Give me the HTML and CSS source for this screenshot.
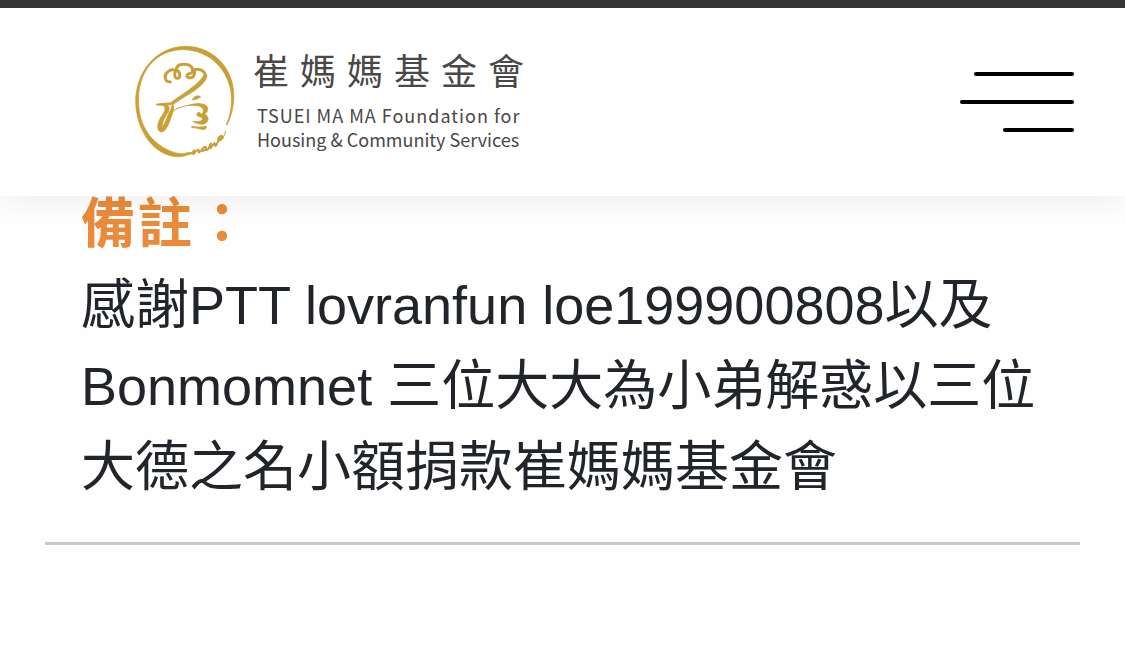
FILE: index.html
```html
<!DOCTYPE html>
<html lang="zh-Hant">
<head>
    <meta charset="UTF-8">
    <meta name="viewport" content="width=device-width, initial-scale=1.0">
    <title>崔媽媽基金會</title>
    <link rel="stylesheet" href="styles.css">
</head>
<body>

    <!-- Header -->
    <header class="site-header">
        <a class="logo" href="#">
            <svg class="logo-mark" viewBox="0 0 360 390" aria-hidden="true">
                <!-- Ring -->
                <path class="shape" d="M306 270 C322 238 328 205 326 170 C319 88 255 33 180 34 C92 36 31 112 32 203 C35 290 88 361 155 365 C174 366 188 361 200 353 L188 353 C172 359 152 355 134 347 C81 325 43 275 41 205 C36 112 92 43 176 44 C245 46 302 91 317 165 C323 205 317 240 304 268 Z"/>
                <!-- Hair -->
                <path class="line" d="M136 141 C119 141 115 121 128 111 C136 103 147 102 152 108"/>
                <path class="line" d="M152 107 C146 118 149 131 158 130 C166 128 167 115 159 108 C149 101 157 88 175 88 C193 87 204 95 203 108 C202 119 186 113 186 122 C187 131 202 131 207 121 C211 113 208 105 201 99"/>
                <path class="line" d="M203 108 C217 97 240 106 241 122"/>
                <!-- Long stroke -->
                <path class="shape" d="M246 120 C246 152 184 180 145 208 C126 211 106 212 94 210 L94 207 L137 203 C170 178 225 146 235 122 Z"/>
                <!-- Left leg -->
                <path class="shape" d="M108 206 C129 203 137 215 130 231 C121 244 112 258 112 278 C122 262 127 239 137 224 L143 206 C149 219 145 232 139 245 C132 265 124 290 109 291 C92 289 97 260 110 243 C121 229 126 212 108 209 Z"/>
                <path class="thin" d="M136 231 C155 221 189 205 216 210"/>
                <!-- Right strokes -->
                <path class="shape" d="M202 194 C207 183 219 179 227 186 C219 190 212 196 202 194 Z"/>
                <path class="shape" d="M194 211 C211 203 234 204 244 212 C253 222 247 231 239 237 C253 244 253 260 238 267 C226 270 211 265 203 259 C215 259 226 261 232 254 C233 247 226 246 219 244 C212 240 216 230 225 232 L227 238 C236 236 237 223 231 218 C222 210 207 212 194 211 Z"/>
                <path class="shape" d="M201 274 C216 277 228 276 244 274 C246 279 241 284 235 284 C224 283 214 277 201 278 Z"/>
                <!-- Handwritten tail -->
                <path class="tail" d="M188 355 C197 361 203 352 207 347 C210 343 206 353 205 358 C213 349 220 340 222 347 C218 357 226 351 231 343 C237 334 246 333 242 341 C235 352 229 349 233 341 C239 331 245 337 243 345 C251 347 254 333 257 326 C259 324 257 334 256 340 C262 331 269 321 270 326 C268 338 275 333 279 318 C283 305 294 302 290 311 C283 321 276 317 281 308 C287 300 294 302 293 309"/>
                <path class="thin" d="M294 307 C299 302 301 295 301 288"/>
            </svg>
            <span class="logo-text">
                <span class="logo-name">崔媽媽基金會</span>
                <span class="logo-sub">TSUEI MA MA Foundation for</span>
                <span class="logo-sub logo-sub-tight">Housing &amp; Community Services</span>
            </span>
        </a>

        <button class="menu-btn" type="button" aria-label="選單">
            <span class="bar bar-top"></span>
            <span class="bar bar-middle"></span>
            <span class="bar bar-bottom"></span>
        </button>
    </header>

    <!-- Donation note -->
    <main class="content">
        <section class="note">
            <h2>備註：</h2>
            <p>感謝PTT lovranfun loe199900808以及Bonmomnet 三位大大為小弟解惑以三位大德之名小額捐款崔媽媽基金會</p>
        </section>
    </main>

</body>
</html>
```

FILE: styles.css
```css
* {
    box-sizing: border-box;
}
body {
    margin: 0;
    background: #fefefe;
    color: #212529;
    font-family: "Liberation Sans", "Noto Sans CJK TC", sans-serif;
}
.site-header {
    position: sticky;
    top: 0;
    z-index: 10;
    display: flex;
    align-items: center;
    justify-content: space-between;
    padding: 27px 51px 31px 125px;
    background: white;
    border-top: 8px solid #353638;
    box-shadow: 0 10px 24px rgba(0, 0, 0, 0.05);
}
.logo {
    display: flex;
    gap: 8px;
    color: #4a4747;
    text-decoration: none;
}
.logo-mark {
    width: 120px;
    height: 130px;
}
.logo-mark path {
    fill: none;
    stroke: #c8a036;
    stroke-width: 2;
    stroke-linecap: round;
    stroke-linejoin: round;
}
.logo-mark .shape {
    fill: #c8a036;
}
.logo-mark .line {
    stroke-width: 9;
}
.logo-mark .thin {
    stroke-width: 3;
}
.logo-mark .tail {
    stroke-width: 6;
}
.logo-text {
    display: flex;
    flex-direction: column;
    padding-top: 10px;
    font-family: "Noto Sans CJK TC", sans-serif;
}
.logo-name {
    font-size: 36px;
    line-height: 48px;
    letter-spacing: 11px;
    margin-bottom: 10px;
}
.logo-sub {
    padding-left: 4px;
    font-size: 18px;
    line-height: 24px;
    letter-spacing: 1px;
}
.logo-sub-tight {
    letter-spacing: 0;
}
.menu-btn {
    display: flex;
    flex-direction: column;
    align-items: flex-end;
    gap: 24px;
    padding: 4px 0 0;
    border: none;
    background: none;
    cursor: pointer;
}
.bar {
    height: 4px;
    border-radius: 2px;
    background: black;
}
.bar-top {
    width: 100px;
}
.bar-middle {
    width: 114px;
}
.bar-bottom {
    width: 71px;
}
.content {
    margin-top: -12px;
    padding: 0 45px;
}
.note {
    padding: 0 37px 34px 36px;
    border-bottom: 3px solid #c9c9c9;
    font-size: 54px;
    line-height: 81px;
}
.note h2 {
    margin: 0;
    color: #e98b3a;
    font-size: 54px;
    font-weight: bold;
    letter-spacing: 3px;
}
.note p {
    margin: 0;
}
```
